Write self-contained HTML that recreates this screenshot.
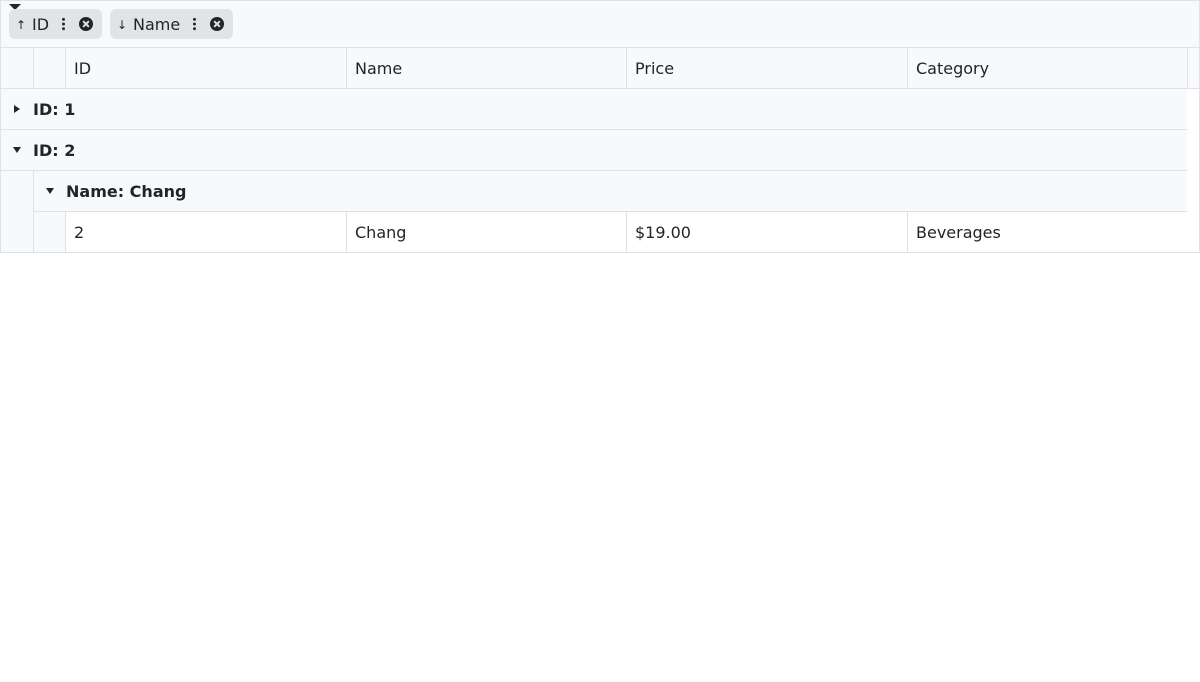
<!DOCTYPE html>
<html><head><style>
*{box-sizing:border-box;margin:0;padding:0}
body{width:1200px;height:682px;background:#fff;font-family:"DejaVu Sans","Liberation Sans",sans-serif;font-size:16px;color:#212529;position:relative;overflow:hidden}
.a{position:absolute}
.chip{position:absolute;top:9px;height:30px;background:#e1e3e7;border-radius:6px}
.chip span{position:absolute;top:5px;line-height:20px}
.chip span.ar{font-size:12px;top:6px}
.x{position:absolute;top:8px;width:14px;height:14px;border-radius:50%;background:#212529}
.x:before,.x:after{content:"";position:absolute;left:6px;top:3px;width:2px;height:8px;background:#e1e3e7;transform:rotate(45deg)}
.x:after{transform:rotate(-45deg)}
.dots{position:absolute;top:8px;width:3px;height:14px;background:radial-gradient(circle,#212529 1.3px,transparent 1.6px) 0 0/3px 4.7px repeat-y}
.vl{position:absolute;width:1px;background:#dee2e6}
.hl{position:absolute;height:1px;background:#dee2e6}
.t{position:absolute;line-height:20px}
.b{font-weight:bold}
.tri{position:absolute;width:0;height:0}
.tr{border-top:4px solid transparent;border-bottom:4px solid transparent;border-left:6px solid #212529}
.td{border-left:4px solid transparent;border-right:4px solid transparent;border-top:6px solid #212529}
</style></head><body>
<div class="a" style="left:0;top:0;width:1200px;height:253px;border:1px solid #dee2e6;background:#f8f9fa"></div>
<div class="tri" style="left:9px;top:4px;border-left:6px solid transparent;border-right:6px solid transparent;border-top:6px solid #212529"></div>
<div class="chip" style="left:9px;width:93px"><span class="ar" style="left:7px">↑</span><span style="left:23px;top:6px">ID</span><div class="dots" style="left:53px"></div><div class="x" style="left:70px"></div></div>
<div class="chip" style="left:110px;width:123px"><span class="ar" style="left:7px">↓</span><span style="left:23px;top:6px">Name</span><div class="dots" style="left:83px"></div><div class="x" style="left:100px"></div></div>
<div class="hl" style="left:0;top:47px;width:1200px"></div>
<div class="hl" style="left:0;top:88px;width:1200px"></div>
<div class="vl" style="left:33px;top:48px;height:40px"></div>
<div class="vl" style="left:65px;top:48px;height:40px"></div>
<div class="vl" style="left:346px;top:48px;height:40px"></div>
<div class="vl" style="left:626px;top:48px;height:40px"></div>
<div class="vl" style="left:907px;top:48px;height:40px"></div>
<div class="vl" style="left:1187px;top:48px;height:40px"></div>
<div class="t" style="left:74px;top:59px">ID</div>
<div class="t" style="left:355px;top:59px">Name</div>
<div class="t" style="left:635px;top:59px">Price</div>
<div class="t" style="left:916px;top:59px">Category</div>
<div class="a" style="left:1187px;top:89px;width:12px;height:163px;background:#fff"></div>
<div class="hl" style="left:0;top:129px;width:1187px"></div>
<div class="hl" style="left:0;top:170px;width:1187px"></div>
<div class="hl" style="left:33px;top:211px;width:1154px"></div>
<div class="vl" style="left:33px;top:171px;height:81px"></div>
<div class="a" style="left:66px;top:212px;width:1133px;height:40px;background:#fff"></div>
<div class="vl" style="left:65px;top:212px;height:40px"></div>
<div class="vl" style="left:346px;top:212px;height:40px"></div>
<div class="vl" style="left:626px;top:212px;height:40px"></div>
<div class="vl" style="left:907px;top:212px;height:40px"></div>
<div class="hl" style="left:0;top:252px;width:1200px"></div>
<div class="tri tr" style="left:14px;top:105px"></div>
<div class="t b" style="left:33px;top:100px">ID: 1</div>
<div class="tri td" style="left:13px;top:147px"></div>
<div class="t b" style="left:33px;top:141px">ID: 2</div>
<div class="tri td" style="left:46px;top:188px"></div>
<div class="t b" style="left:66px;top:182px">Name: Chang</div>
<div class="t" style="left:74px;top:223px">2</div>
<div class="t" style="left:355px;top:223px">Chang</div>
<div class="t" style="left:635px;top:223px">$19.00</div>
<div class="t" style="left:916px;top:223px">Beverages</div>
</body></html>
